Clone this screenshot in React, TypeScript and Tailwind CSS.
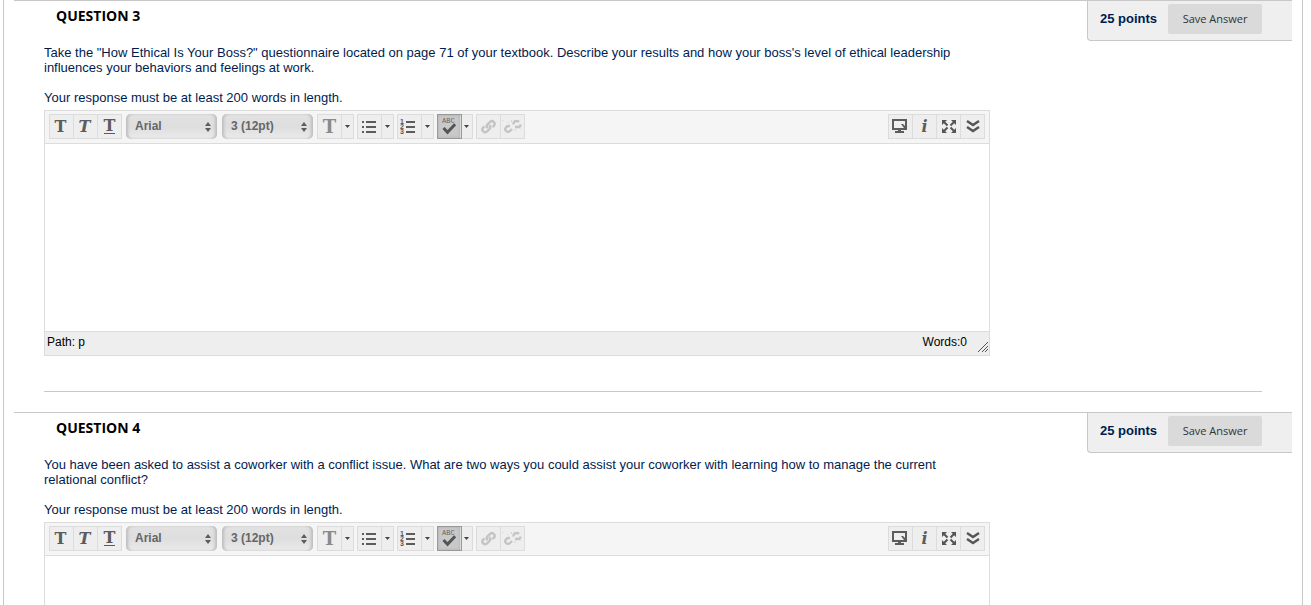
import React, { useState } from 'react';

type IconProps = { children: React.ReactNode };

const Icon: React.FC<IconProps> = ({ children }) => (
  <svg className="h-[23px] w-[23px] shrink-0" viewBox="0 0 23 23" fill="none" aria-hidden="true">
    {children}
  </svg>
);

const BulletListIcon = () => (
  <Icon>
    <path
      fill="#5c5c5c"
      d="M4 6h2v2H4zM8 6h10v2H8zM4 11h2v2H4zM8 11h10v2H8zM4 16h2v2H4zM8 16h10v2H8z"
    />
  </Icon>
);

const NumberListIcon = () => (
  <Icon>
    <path fill="#5c5c5c" d="M8 6h9v2H8zM8 11h9v2H8zM8 16h9v2H8z" />
    <g fill="#555" fontFamily="Liberation Sans, sans-serif" fontSize="7" fontWeight="700">
      <text x="2" y="9">1</text>
      <text x="2" y="14">2</text>
      <text x="2" y="19">3</text>
    </g>
  </Icon>
);

const SpellIcon = () => (
  <Icon>
    <text x="4" y="8" fill="#666" fontFamily="Liberation Mono, monospace" fontSize="7" fontWeight="400">
      ABC
    </text>
    <path d="M5.500 13l4 4.200 7.600-8" stroke="#555" strokeWidth="3" />
  </Icon>
);

const LinkIcon = () => (
  <Icon>
    <g stroke="#c4c4c4" strokeWidth="2.400">
      <path d="M10.800 13.200a2.700 2.700 0 01-.3-3.800l2.700-2.600a2.700 2.700 0 013.800 3.800l-1.500 1.500" />
      <path d="M12.200 10.200a2.700 2.700 0 01.3 3.800l-2.700 2.600a2.700 2.700 0 01-3.800-3.800l1.500-1.500" />
    </g>
  </Icon>
);

const UnlinkIcon = () => (
  <Icon>
    <g stroke="#c4c4c4" strokeWidth="2.400">
      <path d="M9 11H7.500a3 3 0 00-2.500 1.500 2.500 2.500 0 000 3.500 2.800 2.800 0 004 0l2-2" />
      <path d="M12.500 9.500a3 3 0 013-3.500 3 3 0 012.500 1M14 12h3a2.500 2.500 0 002.500-2.500" />
    </g>
    <path d="M1.500 5.500h1M6.500 7.500h1M10.500 5v2M14 14v2M18.500 13.500h1" stroke="#d4d4d4" />
  </Icon>
);

const MonitorIcon = () => (
  <Icon>
    <rect x="4" y="5" width="13" height="9" stroke="#5c5c5c" strokeWidth="2" />
    <path fill="#5c5c5c" d="M9 14h3v2h3v2H6v-2h3zM12 9h2l2 2v2h-1z" />
  </Icon>
);

const FullscreenIcon = () => (
  <Icon>
    <path fill="#555" d="M5 5h5L5 10zM19 5h-5l5 5zM5 18h5l-5-5zM19 18h-5l5-5z" />
    <path
      d="M7 7l3.500 3.500M17 7l-3.500 3.500M7 16l3.500-3.500M17 16l-3.500-3.500"
      stroke="#555"
      strokeWidth="2"
    />
  </Icon>
);

const ChevronsIcon = () => (
  <Icon>
    <path d="M6 6l6 4 6-4M6 12l6 4 6-4" stroke="#555" strokeWidth="2.400" />
  </Icon>
);

const Group: React.FC<{ children: React.ReactNode }> = ({ children }) => (
  <div className="flex h-[25px] shrink-0 divide-x divide-[#dcdcdc] border border-[#dcdcdc] bg-[#eeeeee]">
    {children}
  </div>
);

type ToolProps = { label: string; className?: string; children: React.ReactNode };

const Tool: React.FC<ToolProps> = ({ label, className = 'w-[23px]', children }) => (
  <button
    type="button"
    aria-label={label}
    title={label}
    className={`box-content flex h-[23px] items-center justify-center font-['DejaVu_Serif',serif] text-base leading-none font-bold text-[#5c5c5c] ${className}`}
  >
    {children}
  </button>
);

const Arrow: React.FC<{ label: string }> = ({ label }) => (
  <Tool label={label} className="w-[11px]">
    <svg className="h-[3px] w-[5px]" viewBox="0 0 5 3" aria-hidden="true">
      <path d="M0 0h5L2.500 3z" fill="#444" />
    </svg>
  </Tool>
);

type PickerProps = { label: string; options: string[] };

const Picker: React.FC<PickerProps> = ({ label, options }) => (
  <div className="relative mx-px h-[25px] w-[91px] shrink-0">
    <select
      aria-label={label}
      className="h-full w-full appearance-none rounded-[5px] bg-linear-to-b from-[#e2e2e2] via-[#dedede] to-[#ebebeb] pr-4 pb-px pl-[9px] text-xs font-bold text-[#666] shadow-[inset_3px_0_3px_-1px_#bdbdbd,inset_-3px_0_3px_-1px_#bdbdbd,inset_0_0_1px_#d8d8d8]"
    >
      {options.map((option) => (
        <option key={option}>{option}</option>
      ))}
    </select>
    <svg
      className="pointer-events-none absolute top-2 right-1.5 h-[10px] w-[6px]"
      viewBox="0 0 6 10"
      aria-hidden="true"
    >
      <path d="M3 0l3 4H0zM3 10l3-4H0z" fill="#5c5c5c" />
    </svg>
  </div>
);

const Toolbar = () => (
  <div className="flex justify-between border-b border-[#dcdcdc] bg-[#f5f5f5] px-1 pt-[3px] pb-1">
    <div className="flex gap-[3px]">
      <Group>
        <Tool label="Bold" className="w-[21px] pr-0.5">
          T
        </Tool>
        <Tool label="Italic" className="w-[21px] pr-0.5">
          <span className="italic">T</span>
        </Tool>
        <Tool label="Underline">
          <span className="border-b border-[#5c5c5c] leading-[14px]">T</span>
        </Tool>
      </Group>
      <Picker label="Font family" options={['Arial', 'Georgia', 'Verdana']} />
      <Picker label="Font size" options={['3 (12pt)', '4 (14pt)', '5 (18pt)']} />
      <Group>
        <Tool label="Text color">
          <span className="text-lg leading-none text-[#8a8a8a]">T</span>
        </Tool>
        <Arrow label="More colors" />
      </Group>
      <Group>
        <Tool label="Bullet list">
          <BulletListIcon />
        </Tool>
        <Arrow label="Bullet styles" />
      </Group>
      <Group>
        <Tool label="Numbered list">
          <NumberListIcon />
        </Tool>
        <Arrow label="Number styles" />
      </Group>
      <Group>
        <Tool
          label="Spell check"
          className="w-[22px] bg-[#c9c9c9] shadow-[inset_0_0_3px_#aaa] outline outline-[#999]"
        >
          <SpellIcon />
        </Tool>
        <Arrow label="Spelling language" />
      </Group>
      <Group>
        <Tool label="Insert link">
          <LinkIcon />
        </Tool>
        <Tool label="Remove link">
          <UnlinkIcon />
        </Tool>
      </Group>
    </div>
    <Group>
      <Tool label="Preview">
        <MonitorIcon />
      </Tool>
      <Tool label="Help">
        <span className="italic">i</span>
      </Tool>
      <Tool label="Full screen">
        <FullscreenIcon />
      </Tool>
      <Tool label="Show more">
        <ChevronsIcon />
      </Tool>
    </Group>
  </div>
);

const Editor: React.FC<{ label: string }> = ({ label }) => {
  const [text, setText] = useState('');
  const words = text.split(/\s+/).filter(Boolean).length;

  return (
    <div className="mt-[5px] max-w-[946px] border border-[#dcdcdc]">
      <Toolbar />
      <textarea
        aria-label={label}
        value={text}
        onChange={(e) => setText(e.target.value)}
        className="block h-[187px] w-full resize-none bg-white p-2 outline-none"
      />
      <div className="flex h-6 justify-between border-t border-[#dcdcdc] bg-[#eeeeee] pl-0.5 text-xs leading-5 text-black">
        <span>Path: p</span>
        <div className="flex items-end gap-2.5">
          <span className="self-start">Words:{words}</span>
          <svg className="mb-0.5 h-3 w-3" viewBox="0 0 12 12" aria-hidden="true">
            <path d="M1 11L11 1M5 11l6-6M8 11l3-3" stroke="#555" />
          </svg>
        </div>
      </div>
    </div>
  );
};

type QuestionProps = { number: number; points: number; text: string };

const Question: React.FC<QuestionProps> = ({ number, points, text }) => (
  <section className="mb-5 border-t border-[#c8c8c8]">
    <div className="flex items-start">
      <div className="min-w-0 flex-1 pl-[30px]">
        <h3 className="mb-3.5 pl-3 font-['Open_Sans',sans-serif] text-sm leading-[30px] font-bold text-black">
          QUESTION {number}
        </h3>
        <p className="mb-[15px] max-w-[920px]">{text}</p>
        <p>Your response must be at least 200 words in length.</p>
        <Editor label={`Answer to question ${number}`} />
      </div>
      {/* Points and save */}
      <div className="flex h-10 w-[205px] items-start gap-[11px] rounded-bl-[4px] border-b border-l border-[#c8c8c8] bg-[#efefef] pt-[3px] pl-3">
        <span className="leading-[30px] font-bold">{points} points</span>
        <button
          type="button"
          className="h-[30px] w-[94px] rounded-xs bg-[#dadada] pb-0.5 font-['Open_Sans',sans-serif] text-[11px] text-[#333]"
        >
          Save Answer
        </button>
      </div>
    </div>
    <hr className="mx-[30px] mt-[35px] border-[#c8c8c8]" />
  </section>
);

const questions: QuestionProps[] = [
  {
    number: 3,
    points: 25,
    text: 'Take the "How Ethical Is Your Boss?" questionnaire located on page 71 of your textbook. Describe your results and how your boss\'s level of ethical leadership influences your behaviors and feelings at work.',
  },
  {
    number: 4,
    points: 25,
    text: 'You have been asked to assist a coworker with a conflict issue. What are two ways you could assist your coworker with learning how to manage the current relational conflict?',
  },
];

const App: React.FC = () => (
  <div className="h-screen overflow-hidden bg-white font-['Liberation_Sans',Arial,sans-serif] text-[13px] leading-[15px] text-[#001c4f]">
    <main className="mr-2 ml-[3px] min-h-full border-x border-[#c8c8c8] px-2.5">
      {questions.map((question) => (
        <Question key={question.number} {...question} />
      ))}
    </main>
  </div>
);

export default App;
